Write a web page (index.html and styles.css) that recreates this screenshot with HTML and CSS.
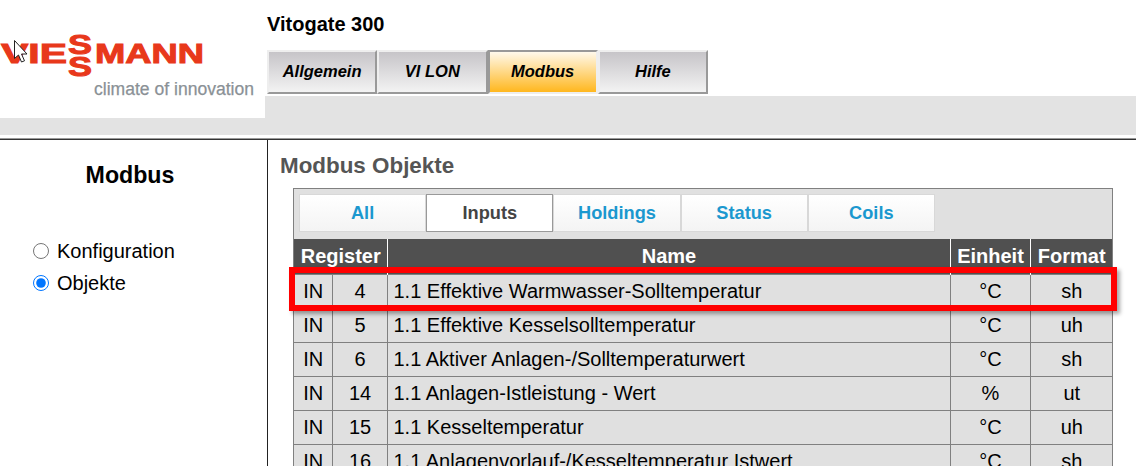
FILE: index.html
```html
<!DOCTYPE html>
<html lang="de">
<head>
<meta charset="utf-8">
<title>Vitogate 300</title>
<link rel="stylesheet" href="styles.css">
</head>
<body>
<header class="top">
  <div class="brand">
    <svg class="logo" width="265" height="118" viewBox="0 0 265 118">
      <text class="logo-red" x="1" y="63" textLength="66" lengthAdjust="spacingAndGlyphs">VIE</text>
      <text class="logo-red" x="68" y="54" textLength="24" lengthAdjust="spacingAndGlyphs">S</text>
      <text class="logo-red" x="68" y="76" textLength="24" lengthAdjust="spacingAndGlyphs">S</text>
      <text class="logo-red" x="95" y="63" textLength="109" lengthAdjust="spacingAndGlyphs">MANN</text>
      <text class="logo-grey" x="94" y="95" textLength="160" lengthAdjust="spacingAndGlyphs">climate of innovation</text>
      <path class="cursor" d="M14.5 40.5v18l4-3.5 3 7 3-1.2-3-6.8h5.5z"/>
    </svg>
    <div class="band"></div>
  </div>
  <div class="head-main">
    <h1 class="product">Vitogate 300</h1>
    <nav class="main-tabs">
      <a class="main-tab">Allgemein</a>
      <a class="main-tab">VI LON</a>
      <a class="main-tab active">Modbus</a>
      <a class="main-tab">Hilfe</a>
    </nav>
    <div class="band"></div>
  </div>
</header>
<div class="layout">
  <aside class="side">
    <h2 class="side-title">Modbus</h2>
    <label class="opt"><input type="radio" name="m"><span>Konfiguration</span></label>
    <label class="opt"><input type="radio" name="m" checked><span>Objekte</span></label>
  </aside>
  <main class="content">
    <h2 class="page-title">Modbus Objekte</h2>
    <div class="panel">
      <div class="sub-tabs">
        <a class="sub-tab">All</a>
        <a class="sub-tab current">Inputs</a>
        <a class="sub-tab">Holdings</a>
        <a class="sub-tab">Status</a>
        <a class="sub-tab">Coils</a>
      </div>
      <div class="table-wrap">
        <table class="objects">
          <colgroup><col class="c1"><col class="c2"><col class="c3"><col class="c4"><col class="c5"></colgroup>
          <thead>
            <tr><th colspan="2">Register</th><th>Name</th><th>Einheit</th><th>Format</th></tr>
          </thead>
          <tbody>
            <tr><td>IN</td><td>4</td><td class="name">1.1 Effektive Warmwasser-Solltemperatur</td><td>°C</td><td>sh</td></tr>
            <tr><td>IN</td><td>5</td><td class="name">1.1 Effektive Kesselsolltemperatur</td><td>°C</td><td>uh</td></tr>
            <tr><td>IN</td><td>6</td><td class="name">1.1 Aktiver Anlagen-/Solltemperaturwert</td><td>°C</td><td>sh</td></tr>
            <tr><td>IN</td><td>14</td><td class="name">1.1 Anlagen-Istleistung - Wert</td><td>%</td><td>ut</td></tr>
            <tr><td>IN</td><td>15</td><td class="name">1.1 Kesseltemperatur</td><td>°C</td><td>uh</td></tr>
            <tr><td>IN</td><td>16</td><td class="name">1.1 Anlagenvorlauf-/Kesseltemperatur Istwert</td><td>°C</td><td>sh</td></tr>
          </tbody>
        </table>
        <div class="highlight"></div>
      </div>
    </div>
  </main>
</div>
</body>
</html>
```
FILE: styles.css
```css
* { box-sizing: border-box; }
html, body { margin: 0; height: 466px; overflow: hidden; background: #fff; }
body { font-family: "Liberation Sans", Arial, sans-serif; color: #000; }

.top { display: flex; height: 135px; }
.brand { width: 265px; display: flex; flex-direction: column; }
.logo { display: block; flex: none; }
.logo-red { font: bold 28px "Liberation Sans", Arial, sans-serif; fill: #e8381b; stroke: #e8381b; stroke-width: 1px; }
.logo-grey { font: 18px "Liberation Sans", Arial, sans-serif; fill: #8a9196; stroke: #8a9196; stroke-width: .25px; }
.cursor { fill: #fff; stroke: #222; stroke-width: 1; }
.band { flex: 1; background: #e3e3e3; }

.head-main { flex: 1; display: flex; flex-direction: column; }
.product { margin: 13px 0 0 2px; font-size: 20px; line-height: 23px; font-weight: bold; }
.main-tabs { display: flex; margin: 14px 0 2px 2px; height: 44px; }
.main-tab {
  width: 110.25px; display: flex; align-items: center; justify-content: center;
  padding-bottom: 2px;
  font-size: 16.5px; font-weight: bold; font-style: italic;
  background: linear-gradient(#c6c4c8, #f3f3f3);
  border: 2px solid; border-color: #eeeeee #999999 #999999 #eeeeee;
}
.main-tab.active {
  background: linear-gradient(#fff9ec, #ffb71e);
  border-color: #999999 #eeeeee #eeeeee #999999;
}

.layout { display: flex; margin-top: 4px; border-top: 1px solid #333; box-shadow: 0 -1px 0 #999; height: 327px; }
.side { width: 268px; flex: none; border-right: 1px solid #222; padding: 22px 0 0 33px; }
.side-title { margin: 0 0 46px; width: 194px; text-align: center; font-size: 23.2px; line-height: 27px; font-weight: bold; }
.opt { display: flex; align-items: center; gap: 8px; height: 32px; font-size: 20px; }
.opt input { width: 16px; height: 16px; margin: 0; }

.content { flex: 1; padding: 13px 23px 0 12px; }
.page-title { margin: 0 0 9px; font-size: 22.4px; line-height: 26px; font-weight: bold; color: #555; }
.panel { margin-left: 13px; border: 1px solid #808080; background: #e0e0e0; }
.sub-tabs { display: flex; height: 49px; padding: 5px 0 0 5px; }
.sub-tab {
  width: 127.2px; height: 38px; display: flex; align-items: center; justify-content: center;
  font-size: 18.2px; font-weight: bold; color: #1b98cf;
  background: linear-gradient(#ffffff, #f4f4f4);
  border: 1px solid #d8d8d8;
}
.sub-tab.current { background: #fff; border-color: #999; color: #444; }

.table-wrap { position: relative; }
.objects { width: 818px; border-collapse: collapse; table-layout: fixed; font-size: 20px; }
.c1 { width: 38px; }
.c2 { width: 55px; }
.c3 { width: 563px; }
.c4 { width: 80px; }
.c5 { width: 82px; }
.objects th {
  height: 36px; padding: 0 0 0 1px; background: #505050; color: #fff; font-weight: bold;
  text-align: center; border-left: 1px solid #fff; border-top: 1px solid #e0e0e0;
}
.objects th:first-child { border-left: 0; }
.objects td {
  height: 34px; padding: 0 0 0 1px; text-align: center;
  border: 1px solid #808080;
}
.objects td:first-child { border-left: 0; }
.objects td:last-child { border-right: 0; }
.objects td.name { text-align: left; padding-left: 6px; }
.highlight {
  position: absolute; left: -5px; top: 29px; width: 828px; height: 44px;
  border: 6px solid #f00; box-shadow: 3px 3px 4px rgba(0, 0, 0, .35);
}
```
